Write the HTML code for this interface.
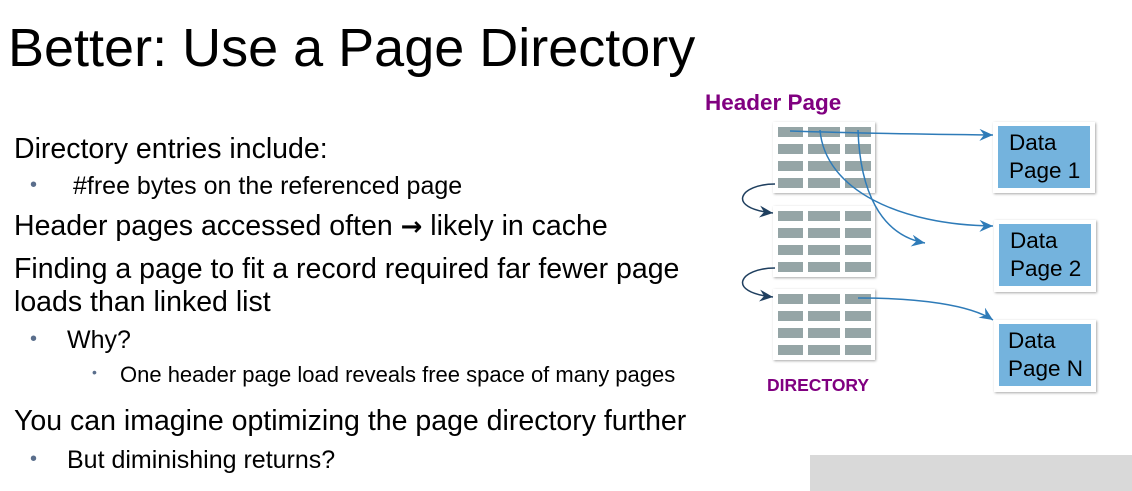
<!DOCTYPE html>
<html><head><style>
body{margin:0;width:1132px;height:491px;background:#fff;position:relative;overflow:hidden;font-family:"Liberation Sans",Arial,sans-serif;color:#000}
.t{position:absolute;white-space:nowrap}
.b{position:absolute;font-size:20px;color:#5a6e8c}
</style></head><body>
<div class="t" style="left:8px;top:17px;font-size:54px">Better: Use a Page Directory</div>
<div class="t" style="left:14px;top:133px;font-size:28.5px">Directory entries include:</div>
<div class="b" style="left:30px;top:174px">•</div>
<div class="t" style="left:73px;top:172px;font-size:25px">#free bytes on the referenced page</div>
<div class="t" style="left:14px;top:210px;font-size:28.5px">Header pages accessed often <span style="font-weight:bold;font-family:'DejaVu Sans',sans-serif;font-size:26px">→</span> likely in cache</div>
<div class="t" style="left:14px;top:253px;font-size:28.5px">Finding a page to fit a record required far fewer page</div>
<div class="t" style="left:14px;top:286px;font-size:28.5px">loads than linked list</div>
<div class="b" style="left:30px;top:328px">•</div>
<div class="t" style="left:67px;top:326px;font-size:25px">Why?</div>
<div class="b" style="left:92px;top:364px;font-size:14px">•</div>
<div class="t" style="left:120px;top:362px;font-size:22px">One header page load reveals free space of many pages</div>
<div class="t" style="left:14px;top:405px;font-size:28.5px">You can imagine optimizing the page directory further</div>
<div class="b" style="left:30px;top:448px">•</div>
<div class="t" style="left:67px;top:446px;font-size:25px">But diminishing returns?</div>
<div style="position:absolute;left:810px;top:455px;width:322px;height:36px;background:#d9d9d9"></div>
<div class="t" style="left:705px;top:90px;font-size:22.5px;font-weight:bold;color:#800080">Header Page</div>
<div class="t" style="left:767px;top:375px;font-size:17.5px;font-weight:bold;color:#800080">DIRECTORY</div>
<svg width="1132" height="491" style="position:absolute;left:0;top:0">
<defs><filter id="s" x="-10%" y="-10%" width="120%" height="120%"><feDropShadow dx="1" dy="1" stdDeviation="1.2" flood-opacity="0.35"/></filter>
<marker id="a" markerWidth="10" markerHeight="8" refX="9" refY="4" orient="auto"><path d="M0,0 L9,4 L0,8 L3,4z" fill="#2e7bb8"/></marker>
<marker id="d" markerWidth="10" markerHeight="8" refX="9" refY="4" orient="auto"><path d="M0,0 L9,4 L0,8 L3,4z" fill="#1f3f5f"/></marker></defs>
<g id="pg">
<rect x="773" y="122" width="102" height="71" fill="#fff" filter="url(#s)"/>
<g fill="#95a5a6">
<rect x="778" y="127" width="25" height="10"/><rect x="808" y="127" width="32" height="10"/><rect x="845" y="127" width="26" height="10"/>
<rect x="778" y="144" width="25" height="10"/><rect x="808" y="144" width="32" height="10"/><rect x="845" y="144" width="26" height="10"/>
<rect x="778" y="161" width="25" height="10"/><rect x="808" y="161" width="32" height="10"/><rect x="845" y="161" width="26" height="10"/>
<rect x="778" y="178" width="25" height="10"/><rect x="808" y="178" width="32" height="10"/><rect x="845" y="178" width="26" height="10"/>
</g></g>
<use href="#pg" y="84"/><use href="#pg" y="167"/>
<g filter="url(#s)" fill="#fff">
<rect x="993" y="122" width="102" height="71"/><rect x="994" y="220" width="102" height="72"/><rect x="994" y="320" width="102" height="72"/></g>
<g fill="#74b3dd"><rect x="998" y="126" width="92" height="62"/><rect x="999" y="224" width="92" height="62"/><rect x="999" y="324" width="92" height="62"/></g>
<g fill="none" stroke="#2e7bb8" stroke-width="1.5">
<path d="M790,131 C850,133 900,134 993,135" marker-end="url(#a)"/>
<path d="M820,130 C825,190 900,225 993,226" marker-end="url(#a)"/>
<path d="M858,130 C860,190 880,235 925,243" marker-end="url(#a)"/>
<path d="M858,298 C920,298 970,305 993,320" marker-end="url(#a)"/>
</g>
<g fill="none" stroke="#1f3f5f" stroke-width="1.5">
<path d="M775,184 C740,184 725,208 773,213" marker-end="url(#d)"/>
<path d="M775,268 C740,268 725,292 773,297" marker-end="url(#d)"/>
</g>
</svg>
<div class="t" style="left:1009px;top:129px;font-size:22.5px;line-height:28px">Data<br>Page 1</div>
<div class="t" style="left:1010px;top:227px;font-size:22.5px;line-height:28px">Data<br>Page 2</div>
<div class="t" style="left:1008px;top:327px;font-size:22.5px;line-height:28px">Data<br>Page N</div>
</body></html>
